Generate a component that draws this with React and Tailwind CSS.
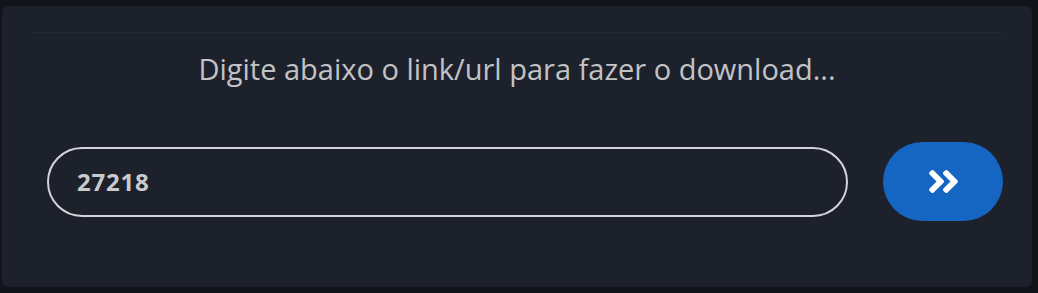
import React from "react";
import { FaAngleDoubleRight } from "react-icons/fa";

export default function App() {
  return (
    <div className="w-[1038px] h-[293px] bg-[#111419] pt-[6px] pl-[2px] pr-[6px] pb-[6px]" style={{ fontFamily: '"Open Sans", "Noto Sans", sans-serif' }}>
      <div className="h-[281px] rounded-[6px] bg-[#1d212c] flex flex-col">
        <div className="mx-[28px] mt-[26px] border-t border-[#232733]" />
        <div className="mt-[16px] text-center text-[29px] leading-[40px] text-[#c2c3c6]">
          Digite abaixo o link/url para fazer o download...
        </div>
        <div className="mt-[53px] flex items-center pl-[45px] pr-[29px] gap-[35px]">
          <div className="flex-1 h-[70px] rounded-full border-2 border-[#d4d5d8] flex items-center pl-[28px]">
            <span className="text-[24px] font-bold text-[#c9cacd] tracking-[0.8px]">27218</span>
          </div>
          <button className="w-[120px] h-[79px] rounded-full bg-[#1565c2] flex items-center justify-center">
            <FaAngleDoubleRight className="text-white w-[37px] h-[37px]" />
          </button>
        </div>
      </div>
    </div>
  );
}
